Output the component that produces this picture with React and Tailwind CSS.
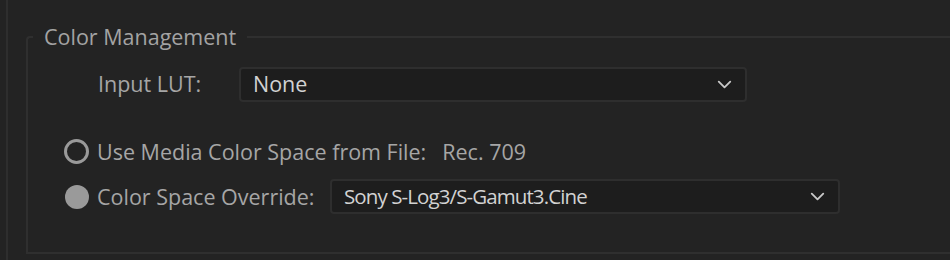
import { ChevronDown } from "lucide-react";

function Select({ value, className, textClassName = "" }) {
  return (
    <div
      className={`flex h-[35px] items-center justify-between rounded-[4px] border-2 border-[#2e2e2e] bg-[#1d1d1d] pl-[12px] pr-[9px] text-[#d2d2d2] ${className}`}
    >
      <span className={textClassName}>{value}</span>
      <ChevronDown size={23} strokeWidth={1.9} className="text-[#c8c8c8]" />
    </div>
  );
}

export default function App() {
  return (
    <div
      className="flex h-[260px] w-[950px] overflow-hidden bg-[#232323] text-[21.5px] leading-none text-[#a6a6a6]"
      style={{ fontFamily: '"Open Sans", "Noto Sans", sans-serif' }}
    >
      <div className="ml-[6px] h-full w-[2px] shrink-0 bg-[#2e2e2e]" />
      <div className="pl-[18px] pt-[26px]">
        <fieldset className="h-[228px] w-[960px] rounded-tl-[4px] border-2 border-r-0 border-[#2f2f2f] pt-[19px]">
          <legend className="ml-[5px] px-[11px] text-[21.5px] leading-none text-[#a3a3a3]">
            Color Management
          </legend>
          <div className="pl-[36px]">
            <div className="flex h-[35px] items-center">
              <span className="ml-[34px] w-[141px]">Input LUT:</span>
              <Select value="None" className="w-[508px]" />
            </div>
            <div className="mt-[37px] flex h-[26px] items-center">
              <span className="h-[25px] w-[25px] rounded-full border-[3px] border-[#9a9a9a]" />
              <span className="ml-[8px]">Use Media Color Space from File:</span>
              <span className="ml-[16px]">Rec. 709</span>
            </div>
            <div className="mt-[14px] flex h-[36px] items-center">
              <span className="ml-[1px] h-[24px] w-[24px] rounded-full bg-[#9a9a9a]" />
              <span className="ml-[8px] w-[233px]">Color Space Override:</span>
              <Select
                value="Sony S-Log3/S-Gamut3.Cine"
                className="w-[510px]"
                textClassName="text-[20.5px] tracking-[-0.9px]"
              />
            </div>
          </div>
        </fieldset>
      </div>
    </div>
  );
}
